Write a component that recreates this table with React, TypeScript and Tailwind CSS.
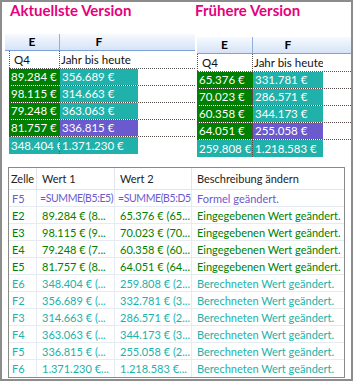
const font = { fontFamily: 'Lato, "Noto Sans", sans-serif' };

type Cell = { text: string; bg: string };
type MiniRow = [Cell, Cell];

const GREEN = "bg-[#008000]";
const TEAL = "bg-[#20b2aa]";
const PURPLE = "bg-[#6a5acd]";

const currentRows: MiniRow[] = [
  [{ text: "89.284 €", bg: GREEN }, { text: "356.689 €", bg: TEAL }],
  [{ text: "98.115 €", bg: GREEN }, { text: "314.663 €", bg: TEAL }],
  [{ text: "79.248 €", bg: GREEN }, { text: "363.063 €", bg: TEAL }],
  [{ text: "81.757 €", bg: GREEN }, { text: "336.815 €", bg: PURPLE }],
  [{ text: "348.404 €", bg: TEAL }, { text: "1.371.230 €", bg: TEAL }],
];

const previousRows: MiniRow[] = [
  [{ text: "65.376 €", bg: GREEN }, { text: "331.781 €", bg: TEAL }],
  [{ text: "70.023 €", bg: GREEN }, { text: "286.571 €", bg: TEAL }],
  [{ text: "60.358 €", bg: GREEN }, { text: "344.173 €", bg: TEAL }],
  [{ text: "64.051 €", bg: GREEN }, { text: "255.058 €", bg: PURPLE }],
  [{ text: "259.808 €", bg: TEAL }, { text: "1.218.583 €", bg: TEAL }],
];

function MiniSheet({ rows, wide }: { rows: MiniRow[]; wide: boolean }) {
  const head = wide ? "grid-cols-[55px_78px]" : "grid-cols-[56px_70px]";
  const cols = wide ? "grid-cols-[51px_78px]" : "grid-cols-[56px_70px]";
  return (
    <div className="text-[11.5px] leading-none">
      <div className={`grid ${head} h-[17px] bg-gradient-to-b from-[#f7faff] to-[#d5e3f6] border-b border-[#7ea2d8]`}>
        <div className="flex items-center justify-center text-[12px] font-bold text-black border-r border-[#8fb0de]">E</div>
        <div className="flex items-center justify-center text-[12px] font-bold text-black">F</div>
      </div>
      <div className={wide ? "ml-[4px]" : ""}>
        <div className={`grid ${cols} h-[18px] bg-white border-b border-dotted border-[#555]`}>
          <div className="flex items-center pl-[4px] text-[#111] border-l border-r border-dotted border-[#555]">Q4</div>
          <div className="flex items-center pl-[1px] text-[#111] whitespace-nowrap overflow-hidden">Jahr bis heute</div>
        </div>
        {rows.map((r, i) => (
          <div key={i} className={`grid ${cols} h-[17px] border-b border-dotted border-[#5a4a4a] last:border-b-0`}>
            <div className={`${r[0].bg} flex items-center pl-[2px] text-white whitespace-nowrap border-r border-dotted border-[#5a4a4a]`}>
              {r[0].text}
            </div>
            <div className={`${r[1].bg} flex items-center pl-[2px] text-white whitespace-nowrap`}>{r[1].text}</div>
          </div>
        ))}
      </div>
    </div>
  );
}

type Change = { cell: string; v1: string; v2: string; desc: string; color: string };

const P = "text-[#6a5acd]";
const G = "text-[#008000]";
const T = "text-[#20b2aa]";

const changes: Change[] = [
  { cell: "F5", v1: "=SUMME(B5:E5)", v2: "=SUMME(B5:D5)", desc: "Formel geändert.", color: P },
  { cell: "E2", v1: "89.284 € (8...", v2: "65.376 € (65...", desc: "Eingegebenen Wert geändert.", color: G },
  { cell: "E3", v1: "98.115 € (9...", v2: "70.023 € (70...", desc: "Eingegebenen Wert geändert.", color: G },
  { cell: "E4", v1: "79.248 € (7...", v2: "60.358 € (60...", desc: "Eingegebenen Wert geändert.", color: G },
  { cell: "E5", v1: "81.757 € (8...", v2: "64.051 € (64...", desc: "Eingegebenen Wert geändert.", color: G },
  { cell: "E6", v1: "348.404 € (...", v2: "259.808 € (2...", desc: "Berechneten Wert geändert.", color: T },
  { cell: "F2", v1: "356.689 € (...", v2: "332.781 € (3...", desc: "Berechneten Wert geändert.", color: T },
  { cell: "F3", v1: "314.663 € (...", v2: "286.571 € (2...", desc: "Berechneten Wert geändert.", color: T },
  { cell: "F4", v1: "363.063 € (...", v2: "344.173 € (3...", desc: "Berechneten Wert geändert.", color: T },
  { cell: "F5", v1: "336.815 € (...", v2: "255.058 € (2...", desc: "Berechneten Wert geändert.", color: T },
  { cell: "F6", v1: "1.371.230 €...", v2: "1.218.583 €...", desc: "Berechneten Wert geändert.", color: T },
];

const grid = "grid grid-cols-[28px_78px_77px_1fr]";

export default function App() {
  return (
    <div className="w-[353px] h-[381px] border-2 border-[#8c8c8c] bg-white overflow-hidden" style={font}>
      <div className="flex">
        <div className="w-[193px]">
          <div className="pl-[8px] text-[15px] leading-[16px] font-bold text-[#e6007e]">Aktuellste Version</div>
          <div className="mt-[16px] ml-[3px]">
            <MiniSheet rows={currentRows} wide />
          </div>
        </div>
        <div className="flex-1">
          <div className="text-[15px] leading-[16px] font-bold text-[#e6007e]">Frühere Version</div>
          <div className="mt-[19px] ml-[2px]">
            <MiniSheet rows={previousRows} wide={false} />
          </div>
        </div>
      </div>

      <div className="mt-[10px] ml-[6px] w-[337px] border border-[#8a8a8a] text-[11px] leading-none">
        <div className={`${grid} h-[22px] text-[#222] border-b border-[#dfe6ef]`}>
          <div className="flex items-center pl-[2px] border-r border-[#dfe6ef]">Zelle</div>
          <div className="flex items-center pl-[5px] border-r border-[#dfe6ef]">Wert 1</div>
          <div className="flex items-center pl-[5px] border-r border-[#dfe6ef]">Wert 2</div>
          <div className="flex items-center pl-[5px]">Beschreibung ändern</div>
        </div>
        {changes.map((c, i) => {
          const formula = c.v1.startsWith("=");
          const val = formula
            ? "flex items-center pl-[3px] text-[10.5px] tracking-[-0.4px] border-r border-[#e6ebf1] whitespace-nowrap overflow-hidden"
            : "flex items-center pl-[5px] border-r border-[#e6ebf1] whitespace-nowrap overflow-hidden";
          return (
            <div key={i} className={`${grid} h-[17px] ${c.color} border-b border-[#e6ebf1] last:border-b-0`}>
              <div className="flex items-center pl-[3px] border-r border-[#e6ebf1]">{c.cell}</div>
              <div className={val}>{c.v1}</div>
              <div className={val}>{c.v2}</div>
              <div className="flex items-center pl-[5px] whitespace-nowrap overflow-hidden">{c.desc}</div>
            </div>
          );
        })}
      </div>
    </div>
  );
}
